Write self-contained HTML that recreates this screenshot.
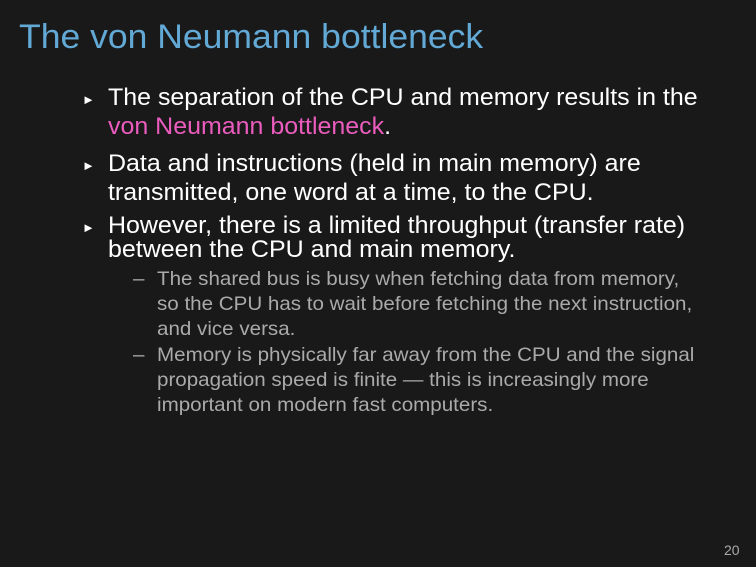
<!DOCTYPE html>
<html><head><style>
body{margin:0;width:756px;height:567px;background:#191919;font-family:"Liberation Sans",sans-serif;position:relative;overflow:hidden}
div{position:absolute;white-space:nowrap;transform-origin:0 0}
.t{left:19px;top:18px;font-size:34px;color:#62a9d6;transform:scaleX(1.045)}
.b{font-size:24px;color:#fff;transform:scaleX(1.04)}
.s{font-size:19.5px;color:#aaaaaa;transform:scaleX(1.055)}
.p{color:#ea5cbd}
.tri{font-size:13px;color:#fff}
</style></head><body>
<div class="t">The von Neumann bottleneck</div>
<div class="tri" style="left:82px;top:92px">►</div>
<div class="b" style="left:108px;top:84px">The separation of the CPU and memory results in the</div>
<div class="b" style="left:108px;top:113px"><span class="p">von Neumann bottleneck</span>.</div>
<div class="tri" style="left:82px;top:158px">►</div>
<div class="b" style="left:108px;top:150px">Data and instructions (held in main memory) are</div>
<div class="b" style="left:108px;top:179px">transmitted, one word at a time, to the CPU.</div>
<div class="tri" style="left:82px;top:220px">►</div>
<div class="b" style="left:108px;top:212px">However, there is a limited throughput (transfer rate)</div>
<div class="b" style="left:108px;top:236px">between the CPU and main memory.</div>
<div class="s" style="left:133px;top:268px">–</div>
<div class="s" style="left:157px;top:268px">The shared bus is busy when fetching data from memory,</div>
<div class="s" style="left:157px;top:293px">so the CPU has to wait before fetching the next instruction,</div>
<div class="s" style="left:157px;top:318px">and vice versa.</div>
<div class="s" style="left:133px;top:344px">–</div>
<div class="s" style="left:157px;top:344px">Memory is physically far away from the CPU and the signal</div>
<div class="s" style="left:157px;top:369px">propagation speed is finite — this is increasingly more</div>
<div class="s" style="left:157px;top:394px">important on modern fast computers.</div>
<div style="left:724px;top:542px;font-size:14px;color:#aaa">20</div>
</body></html>
